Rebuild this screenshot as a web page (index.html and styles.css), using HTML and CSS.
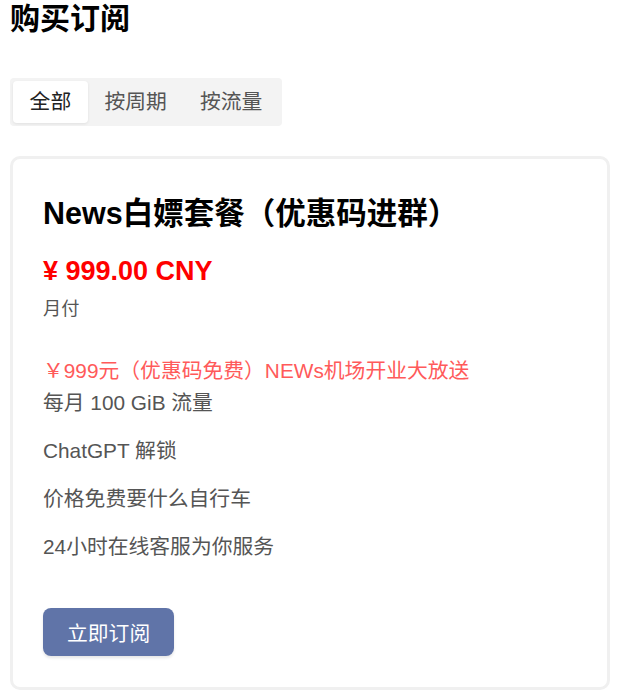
FILE: index.html
```html
<!DOCTYPE html>
<html lang="zh-CN">
<head>
<meta charset="utf-8">
<title>购买订阅</title>
<link rel="stylesheet" href="styles.css">
</head>
<body>
<div class="page">
  <h1 class="page-title">购买订阅</h1>
  <div class="tabs">
    <div class="tab active">全部</div>
    <div class="tab">按周期</div>
    <div class="tab">按流量</div>
  </div>
  <div class="card">
    <h2 class="plan-title">News白嫖套餐（优惠码进群）</h2>
    <div class="price">¥ 999.00 CNY</div>
    <div class="period">月付</div>
    <div class="promo">￥999元（优惠码免费）NEWs机场开业大放送</div>
    <ul class="features">
      <li>每月 100 GiB 流量</li>
      <li>ChatGPT 解锁</li>
      <li>价格免费要什么自行车</li>
      <li>24小时在线客服为你服务</li>
    </ul>
    <button class="btn">立即订阅</button>
  </div>
</div>
</body>
</html>
```
FILE: styles.css
```css
html, body {
  margin: 0;
  padding: 0;
  background: #fff;
}
body {
  font-family: "Liberation Sans", "Noto Sans CJK SC", sans-serif;
  font-size: 20.8px;
  color: #333;
}
.page {
  padding: 0 10px;
}
.page-title {
  margin: 0;
  font-size: 30px;
  line-height: 38px;
  font-weight: bold;
  color: #000;
}
.tabs {
  display: inline-flex;
  margin-top: 40px;
  padding: 3px;
  background: #f3f3f3;
  border-radius: 4px;
}
.tab {
  height: 42px;
  line-height: 42px;
  padding: 0 16.6px;
  color: #555;
  border-radius: 4px;
}
.tab.active {
  background: #fff;
  color: #222;
  box-shadow: 0 1px 3px rgba(0,0,0,0.08);
}
.card {
  margin-top: 30px;
  border: 3px solid #f0f0f0;
  border-radius: 10px;
  padding: 32px 30px 31px;
}
.plan-title {
  margin: 0;
  font-size: 30.5px;
  line-height: 44px;
  font-weight: bold;
  color: #000;
}
.price {
  margin-top: 18px;
  font-size: 27px;
  line-height: 36px;
  font-weight: bold;
  color: #ff0000;
}
.period {
  margin-top: 7px;
  font-size: 18.2px;
  line-height: 26px;
  color: #555;
}
.promo {
  margin-top: 33px;
  line-height: 32px;
  color: #ff5a5a;
}
.features {
  list-style: none;
  margin: 0;
  padding: 0;
  color: #555;
}
.features li {
  line-height: 32px;
  margin-bottom: 16px;
}
.features li:last-child {
  margin-bottom: 0;
}
.btn {
  display: block;
  margin-top: 45px;
  height: 48px;
  padding: 0 24px;
  border: none;
  border-radius: 8px;
  background: #6074a8;
  color: #fff;
  font-family: "Liberation Sans", "Noto Sans CJK SC", sans-serif;
  font-size: 20.8px;
  box-shadow: 0 2px 3px rgba(0,0,0,0.1);
}
```
